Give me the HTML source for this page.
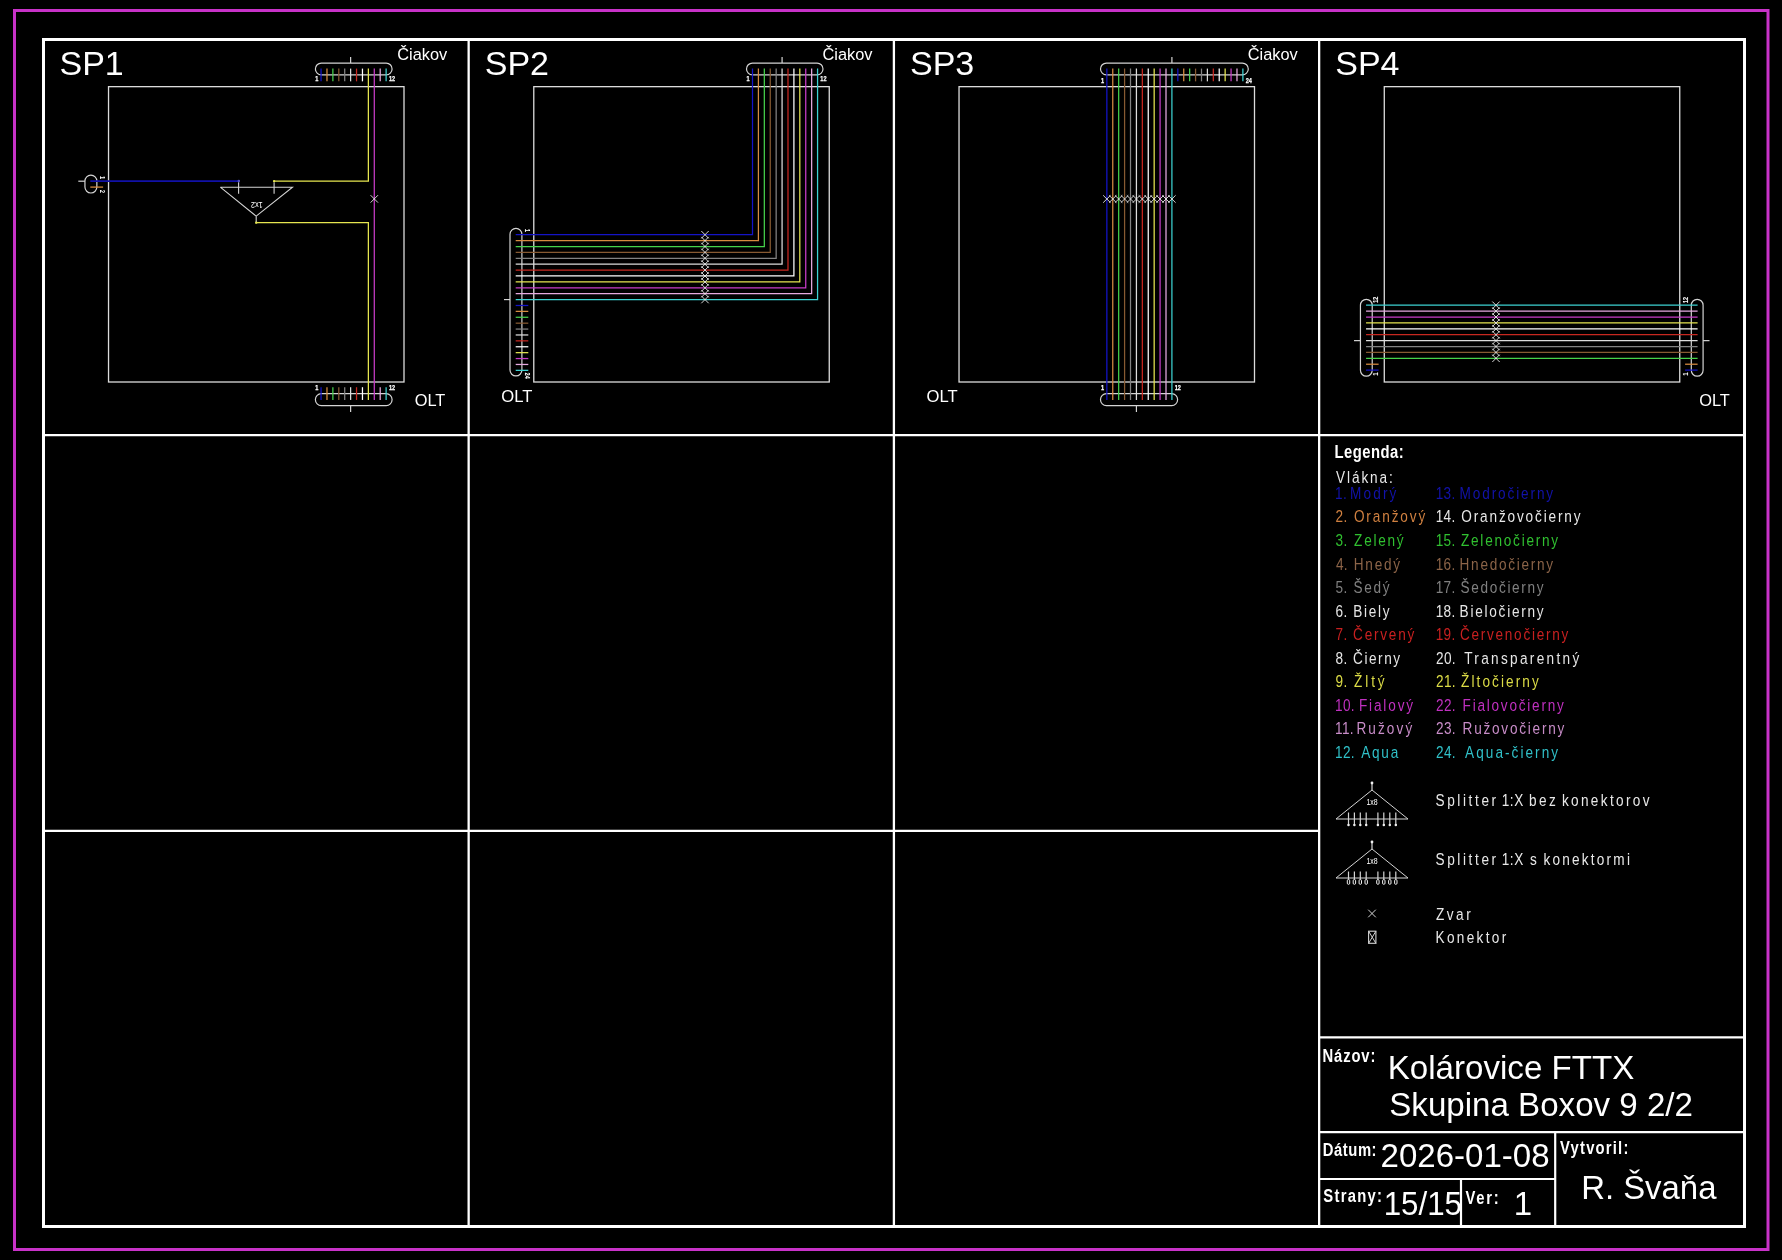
<!DOCTYPE html>
<html lang="sk">
<head>
<meta charset="utf-8">
<title>Kolárovice FTTX - Skupina Boxov 9 2/2</title>
<style>
html,body{margin:0;padding:0;background:#000;}
body{width:1782px;height:1260px;overflow:hidden;}
svg{display:block;font-family:"Liberation Sans",sans-serif;will-change:transform;}
</style>
</head>
<body>
<svg width="1782" height="1260" viewBox="0 0 1782 1260">
<rect x="0" y="0" width="1782" height="1260" fill="#000"/>
<rect x="14.5" y="10.5" width="1753.5" height="1239" rx="0" fill="none" stroke="#c832c8" stroke-width="3"/>
<rect x="43.5" y="39.5" width="1701" height="1187" rx="0" fill="none" stroke="#fff" stroke-width="3"/>
<line x1="468.65" y1="39.5" x2="468.65" y2="1226.5" stroke="#fff" stroke-width="2.3"/>
<line x1="893.9" y1="39.5" x2="893.9" y2="1226.5" stroke="#fff" stroke-width="2.3"/>
<line x1="1319.15" y1="39.5" x2="1319.15" y2="1226.5" stroke="#fff" stroke-width="2.3"/>
<line x1="43.5" y1="435.2" x2="1744.5" y2="435.2" stroke="#fff" stroke-width="2.3"/>
<line x1="43.5" y1="830.9" x2="1319.15" y2="830.9" stroke="#fff" stroke-width="2.3"/>
<line x1="1319.15" y1="1037.4" x2="1744.5" y2="1037.4" stroke="#fff" stroke-width="2.2"/>
<line x1="1319.15" y1="1132.1" x2="1744.5" y2="1132.1" stroke="#fff" stroke-width="2.2"/>
<line x1="1319.15" y1="1179" x2="1555.2" y2="1179" stroke="#fff" stroke-width="2.2"/>
<line x1="1555.2" y1="1132.1" x2="1555.2" y2="1226.5" stroke="#fff" stroke-width="2.2"/>
<line x1="1461" y1="1179" x2="1461" y2="1226.5" stroke="#fff" stroke-width="2.2"/>
<rect x="108.53" y="86.66" width="295.47" height="295.34" rx="0" fill="none" stroke="#dcdcdc" stroke-width="1.3"/>
<rect x="533.78" y="86.66" width="295.47" height="295.34" rx="0" fill="none" stroke="#dcdcdc" stroke-width="1.3"/>
<rect x="959.03" y="86.66" width="295.47" height="295.34" rx="0" fill="none" stroke="#dcdcdc" stroke-width="1.3"/>
<rect x="1384.28" y="86.66" width="295.47" height="295.34" rx="0" fill="none" stroke="#dcdcdc" stroke-width="1.3"/>
<rect x="315.4" y="63.07" width="76.68" height="11.79" rx="5.9" fill="none" stroke="#d4d4d4" stroke-width="1.2"/>
<line x1="350.62" y1="57" x2="350.62" y2="63" stroke="#d4d4d4" stroke-width="1.2"/>
<line x1="321.05" y1="68.6" x2="321.05" y2="81.35" stroke="#1414c8" stroke-width="1.25"/>
<line x1="326.97" y1="68.6" x2="326.97" y2="81.35" stroke="#d88c41" stroke-width="1.25"/>
<line x1="332.88" y1="68.6" x2="332.88" y2="81.35" stroke="#46d24b" stroke-width="1.25"/>
<line x1="338.8" y1="68.6" x2="338.8" y2="81.35" stroke="#875a32" stroke-width="1.25"/>
<line x1="344.71" y1="68.6" x2="344.71" y2="81.35" stroke="#828282" stroke-width="1.25"/>
<line x1="350.62" y1="68.6" x2="350.62" y2="81.35" stroke="#dcdcdc" stroke-width="1.25"/>
<line x1="356.54" y1="68.6" x2="356.54" y2="81.35" stroke="#c82820" stroke-width="1.25"/>
<line x1="362.46" y1="68.6" x2="362.46" y2="81.35" stroke="#ffffff" stroke-width="1.25"/>
<line x1="380.2" y1="68.6" x2="380.2" y2="81.35" stroke="#e6aae0" stroke-width="1.25"/>
<line x1="386.12" y1="68.6" x2="386.12" y2="81.35" stroke="#3cd2d2" stroke-width="1.25"/>
<text x="318.25" y="81.2" font-size="7.2" font-weight="bold" text-anchor="end" fill="#fff" stroke="#fff" stroke-width="0.25" textLength="3.1" lengthAdjust="spacingAndGlyphs">1</text>
<text x="388.92" y="81.2" font-size="7.2" font-weight="bold" text-anchor="start" fill="#fff" stroke="#fff" stroke-width="0.25" textLength="6.2" lengthAdjust="spacingAndGlyphs">12</text>
<rect x="315.4" y="393.67" width="76.68" height="11.9" rx="5.9" fill="none" stroke="#d4d4d4" stroke-width="1.2"/>
<line x1="350.62" y1="405.6" x2="350.62" y2="412" stroke="#d4d4d4" stroke-width="1.2"/>
<line x1="321.05" y1="387.2" x2="321.05" y2="399.95" stroke="#1414c8" stroke-width="1.25"/>
<line x1="326.97" y1="387.2" x2="326.97" y2="399.95" stroke="#d88c41" stroke-width="1.25"/>
<line x1="332.88" y1="387.2" x2="332.88" y2="399.95" stroke="#46d24b" stroke-width="1.25"/>
<line x1="338.8" y1="387.2" x2="338.8" y2="399.95" stroke="#875a32" stroke-width="1.25"/>
<line x1="344.71" y1="387.2" x2="344.71" y2="399.95" stroke="#828282" stroke-width="1.25"/>
<line x1="350.62" y1="387.2" x2="350.62" y2="399.95" stroke="#dcdcdc" stroke-width="1.25"/>
<line x1="356.54" y1="387.2" x2="356.54" y2="399.95" stroke="#c82820" stroke-width="1.25"/>
<line x1="362.46" y1="387.2" x2="362.46" y2="399.95" stroke="#ffffff" stroke-width="1.25"/>
<line x1="380.2" y1="387.2" x2="380.2" y2="399.95" stroke="#e6aae0" stroke-width="1.25"/>
<line x1="386.12" y1="387.2" x2="386.12" y2="399.95" stroke="#3cd2d2" stroke-width="1.25"/>
<text x="318.25" y="390" font-size="7.2" font-weight="bold" text-anchor="end" fill="#fff" stroke="#fff" stroke-width="0.25" textLength="3.1" lengthAdjust="spacingAndGlyphs">1</text>
<text x="388.92" y="390" font-size="7.2" font-weight="bold" text-anchor="start" fill="#fff" stroke="#fff" stroke-width="0.25" textLength="6.2" lengthAdjust="spacingAndGlyphs">12</text>
<polyline points="368.37,68.6 368.37,181.1 274.1,181.1" fill="none" stroke="#e6e650" stroke-width="1.25"/>
<polyline points="256.2,222.66 368.37,222.66 368.37,399.95" fill="none" stroke="#e6e650" stroke-width="1.25"/>
<line x1="374.29" y1="68.6" x2="374.29" y2="399.95" stroke="#c83cc8" stroke-width="1.25"/>
<path d="M370.59 195.2L377.99 202.6M370.59 202.6L377.99 195.2" stroke="#ececec" stroke-width="0.9" fill="none"/>
<rect x="84.95" y="175.2" width="11.9" height="17.8" rx="5.9" fill="none" stroke="#d4d4d4" stroke-width="1.2"/>
<line x1="78.3" y1="181.2" x2="84.9" y2="181.2" stroke="#d4d4d4" stroke-width="1.2"/>
<line x1="90.3" y1="181.1" x2="238.7" y2="181.1" stroke="#1010a8" stroke-width="1.9"/>
<line x1="90.3" y1="187.1" x2="103.1" y2="187.1" stroke="#d88c41" stroke-width="1.25"/>
<text x="100.2" y="175.9" font-size="7.6" font-weight="bold" text-anchor="start" fill="#fff" stroke="#fff" stroke-width="0" textLength="3.27" lengthAdjust="spacingAndGlyphs" transform="rotate(90 100.2 175.9)">1</text>
<text x="100.2" y="189.7" font-size="7.6" font-weight="bold" text-anchor="start" fill="#fff" stroke="#fff" stroke-width="0" textLength="3.27" lengthAdjust="spacingAndGlyphs" transform="rotate(90 100.2 189.7)">2</text>
<polyline points="220.3,187.15 292.5,187.15 256.2,216.2 220.3,187.15" fill="none" stroke="#d4d4d4" stroke-width="1.05"/>
<line x1="238.6" y1="182.3" x2="238.6" y2="193.7" stroke="#d4d4d4" stroke-width="1.1"/>
<line x1="274.1" y1="182.3" x2="274.1" y2="193.7" stroke="#d4d4d4" stroke-width="1.1"/>
<line x1="256.2" y1="216.2" x2="256.2" y2="222.66" stroke="#d4d4d4" stroke-width="1.1"/>
<circle cx="238.8" cy="181.1" r="1.25" fill="#5050c8"/>
<circle cx="274.1" cy="181.1" r="1.2" fill="#e6e650"/>
<circle cx="256.2" cy="222.66" r="1.2" fill="#e6e650"/>
<text x="256.9" y="204.6" font-size="9" text-anchor="middle" fill="#fff" transform="rotate(180 256.9 204.6) translate(0 3.1)" textLength="11.8" lengthAdjust="spacingAndGlyphs">1x2</text>
<rect x="746.5" y="63.07" width="76.5" height="11.79" rx="5.9" fill="none" stroke="#d4d4d4" stroke-width="1.2"/>
<line x1="782.08" y1="57" x2="782.08" y2="63" stroke="#d4d4d4" stroke-width="1.2"/>
<text x="749.7" y="81.2" font-size="7.2" font-weight="bold" text-anchor="end" fill="#fff" stroke="#fff" stroke-width="0.25" textLength="3.1" lengthAdjust="spacingAndGlyphs">1</text>
<text x="820.37" y="81.2" font-size="7.2" font-weight="bold" text-anchor="start" fill="#fff" stroke="#fff" stroke-width="0.25" textLength="6.2" lengthAdjust="spacingAndGlyphs">12</text>
<rect x="510" y="228.4" width="11.9" height="147.56" rx="5.9" fill="none" stroke="#d4d4d4" stroke-width="1.2"/>
<line x1="504" y1="299.58" x2="510" y2="299.58" stroke="#d4d4d4" stroke-width="1.2"/>
<polyline points="515.7,234.7 752.5,234.7 752.5,68.6" fill="none" stroke="#1414c8" stroke-width="1.25"/>
<polyline points="515.7,240.6 758.41,240.6 758.41,68.6" fill="none" stroke="#d88c41" stroke-width="1.25"/>
<polyline points="515.7,246.5 764.33,246.5 764.33,68.6" fill="none" stroke="#46d24b" stroke-width="1.25"/>
<polyline points="515.7,252.39 770.25,252.39 770.25,68.6" fill="none" stroke="#875a32" stroke-width="1.25"/>
<polyline points="515.7,258.29 776.16,258.29 776.16,68.6" fill="none" stroke="#828282" stroke-width="1.25"/>
<polyline points="515.7,264.19 782.08,264.19 782.08,68.6" fill="none" stroke="#dcdcdc" stroke-width="1.25"/>
<polyline points="515.7,270.09 787.99,270.09 787.99,68.6" fill="none" stroke="#c82820" stroke-width="1.25"/>
<polyline points="515.7,275.99 793.9,275.99 793.9,68.6" fill="none" stroke="#ffffff" stroke-width="1.25"/>
<polyline points="515.7,281.88 799.82,281.88 799.82,68.6" fill="none" stroke="#e6e650" stroke-width="1.25"/>
<polyline points="515.7,287.78 805.74,287.78 805.74,68.6" fill="none" stroke="#c83cc8" stroke-width="1.25"/>
<polyline points="515.7,293.68 811.65,293.68 811.65,68.6" fill="none" stroke="#e6aae0" stroke-width="1.25"/>
<polyline points="515.7,299.58 817.57,299.58 817.57,68.6" fill="none" stroke="#3cd2d2" stroke-width="1.25"/>
<line x1="515.7" y1="305.48" x2="528.3" y2="305.48" stroke="#1414c8" stroke-width="1.25"/>
<line x1="515.7" y1="311.37" x2="528.3" y2="311.37" stroke="#d88c41" stroke-width="1.25"/>
<line x1="515.7" y1="317.27" x2="528.3" y2="317.27" stroke="#46d24b" stroke-width="1.25"/>
<line x1="515.7" y1="323.17" x2="528.3" y2="323.17" stroke="#875a32" stroke-width="1.25"/>
<line x1="515.7" y1="329.07" x2="528.3" y2="329.07" stroke="#828282" stroke-width="1.25"/>
<line x1="515.7" y1="334.97" x2="528.3" y2="334.97" stroke="#dcdcdc" stroke-width="1.25"/>
<line x1="515.7" y1="340.86" x2="528.3" y2="340.86" stroke="#c82820" stroke-width="1.25"/>
<line x1="515.7" y1="346.76" x2="528.3" y2="346.76" stroke="#ffffff" stroke-width="1.25"/>
<line x1="515.7" y1="352.66" x2="528.3" y2="352.66" stroke="#e6e650" stroke-width="1.25"/>
<line x1="515.7" y1="358.56" x2="528.3" y2="358.56" stroke="#c83cc8" stroke-width="1.25"/>
<line x1="515.7" y1="364.46" x2="528.3" y2="364.46" stroke="#e6aae0" stroke-width="1.25"/>
<line x1="515.7" y1="370.35" x2="528.3" y2="370.35" stroke="#3cd2d2" stroke-width="1.25"/>
<path d="M701.3 231L708.7 238.4M701.3 238.4L708.7 231" stroke="#ececec" stroke-width="0.9" fill="none"/>
<path d="M701.3 236.9L708.7 244.3M701.3 244.3L708.7 236.9" stroke="#ececec" stroke-width="0.9" fill="none"/>
<path d="M701.3 242.8L708.7 250.2M701.3 250.2L708.7 242.8" stroke="#ececec" stroke-width="0.9" fill="none"/>
<path d="M701.3 248.69L708.7 256.09M701.3 256.09L708.7 248.69" stroke="#ececec" stroke-width="0.9" fill="none"/>
<path d="M701.3 254.59L708.7 261.99M701.3 261.99L708.7 254.59" stroke="#ececec" stroke-width="0.9" fill="none"/>
<path d="M701.3 260.49L708.7 267.89M701.3 267.89L708.7 260.49" stroke="#ececec" stroke-width="0.9" fill="none"/>
<path d="M701.3 266.39L708.7 273.79M701.3 273.79L708.7 266.39" stroke="#ececec" stroke-width="0.9" fill="none"/>
<path d="M701.3 272.29L708.7 279.69M701.3 279.69L708.7 272.29" stroke="#ececec" stroke-width="0.9" fill="none"/>
<path d="M701.3 278.18L708.7 285.58M701.3 285.58L708.7 278.18" stroke="#ececec" stroke-width="0.9" fill="none"/>
<path d="M701.3 284.08L708.7 291.48M701.3 291.48L708.7 284.08" stroke="#ececec" stroke-width="0.9" fill="none"/>
<path d="M701.3 289.98L708.7 297.38M701.3 297.38L708.7 289.98" stroke="#ececec" stroke-width="0.9" fill="none"/>
<path d="M701.3 295.88L708.7 303.28M701.3 303.28L708.7 295.88" stroke="#ececec" stroke-width="0.9" fill="none"/>
<text x="525.4" y="229" font-size="7.2" font-weight="bold" text-anchor="start" fill="#fff" stroke="#fff" stroke-width="0.08" textLength="3.1" lengthAdjust="spacingAndGlyphs" transform="rotate(90 525.4 229)">1</text>
<text x="525.4" y="372.6" font-size="7.2" font-weight="bold" text-anchor="start" fill="#fff" stroke="#fff" stroke-width="0.08" textLength="6.2" lengthAdjust="spacingAndGlyphs" transform="rotate(90 525.4 372.6)">24</text>
<rect x="1100.5" y="63.07" width="147.78" height="11.79" rx="5.9" fill="none" stroke="#d4d4d4" stroke-width="1.2"/>
<line x1="1171.91" y1="57" x2="1171.91" y2="63" stroke="#d4d4d4" stroke-width="1.2"/>
<line x1="1177.83" y1="68.6" x2="1177.83" y2="81.35" stroke="#1414c8" stroke-width="1.25"/>
<line x1="1183.74" y1="68.6" x2="1183.74" y2="81.35" stroke="#d88c41" stroke-width="1.25"/>
<line x1="1189.66" y1="68.6" x2="1189.66" y2="81.35" stroke="#46d24b" stroke-width="1.25"/>
<line x1="1195.57" y1="68.6" x2="1195.57" y2="81.35" stroke="#875a32" stroke-width="1.25"/>
<line x1="1201.49" y1="68.6" x2="1201.49" y2="81.35" stroke="#828282" stroke-width="1.25"/>
<line x1="1207.4" y1="68.6" x2="1207.4" y2="81.35" stroke="#dcdcdc" stroke-width="1.25"/>
<line x1="1213.32" y1="68.6" x2="1213.32" y2="81.35" stroke="#c82820" stroke-width="1.25"/>
<line x1="1219.23" y1="68.6" x2="1219.23" y2="81.35" stroke="#ffffff" stroke-width="1.25"/>
<line x1="1225.15" y1="68.6" x2="1225.15" y2="81.35" stroke="#e6e650" stroke-width="1.25"/>
<line x1="1231.06" y1="68.6" x2="1231.06" y2="81.35" stroke="#c83cc8" stroke-width="1.25"/>
<line x1="1236.98" y1="68.6" x2="1236.98" y2="81.35" stroke="#e6aae0" stroke-width="1.25"/>
<line x1="1242.89" y1="68.6" x2="1242.89" y2="81.35" stroke="#3cd2d2" stroke-width="1.25"/>
<text x="1104.05" y="82.8" font-size="7.2" font-weight="bold" text-anchor="end" fill="#fff" stroke="#fff" stroke-width="0.25" textLength="3.1" lengthAdjust="spacingAndGlyphs">1</text>
<text x="1245.69" y="82.8" font-size="7.2" font-weight="bold" text-anchor="start" fill="#fff" stroke="#fff" stroke-width="0.25" textLength="6.2" lengthAdjust="spacingAndGlyphs">24</text>
<rect x="1100.5" y="393.67" width="77.1" height="11.9" rx="5.9" fill="none" stroke="#d4d4d4" stroke-width="1.2"/>
<line x1="1136.42" y1="405.6" x2="1136.42" y2="412" stroke="#d4d4d4" stroke-width="1.2"/>
<text x="1104.05" y="390" font-size="7.2" font-weight="bold" text-anchor="end" fill="#fff" stroke="#fff" stroke-width="0.25" textLength="3.1" lengthAdjust="spacingAndGlyphs">1</text>
<text x="1174.71" y="390" font-size="7.2" font-weight="bold" text-anchor="start" fill="#fff" stroke="#fff" stroke-width="0.25" textLength="6.2" lengthAdjust="spacingAndGlyphs">12</text>
<line x1="1106.85" y1="68.6" x2="1106.85" y2="399.95" stroke="#1414c8" stroke-width="1.25"/>
<line x1="1112.76" y1="68.6" x2="1112.76" y2="399.95" stroke="#d88c41" stroke-width="1.25"/>
<line x1="1118.68" y1="68.6" x2="1118.68" y2="399.95" stroke="#46d24b" stroke-width="1.25"/>
<line x1="1124.59" y1="68.6" x2="1124.59" y2="399.95" stroke="#875a32" stroke-width="1.25"/>
<line x1="1130.51" y1="68.6" x2="1130.51" y2="399.95" stroke="#828282" stroke-width="1.25"/>
<line x1="1136.42" y1="68.6" x2="1136.42" y2="399.95" stroke="#dcdcdc" stroke-width="1.25"/>
<line x1="1142.34" y1="68.6" x2="1142.34" y2="399.95" stroke="#c82820" stroke-width="1.25"/>
<line x1="1148.25" y1="68.6" x2="1148.25" y2="399.95" stroke="#ffffff" stroke-width="1.25"/>
<line x1="1154.17" y1="68.6" x2="1154.17" y2="399.95" stroke="#e6e650" stroke-width="1.25"/>
<line x1="1160.08" y1="68.6" x2="1160.08" y2="399.95" stroke="#c83cc8" stroke-width="1.25"/>
<line x1="1166" y1="68.6" x2="1166" y2="399.95" stroke="#e6aae0" stroke-width="1.25"/>
<line x1="1171.91" y1="68.6" x2="1171.91" y2="399.95" stroke="#3cd2d2" stroke-width="1.25"/>
<path d="M1103.15 195.3L1110.55 202.7M1103.15 202.7L1110.55 195.3" stroke="#ececec" stroke-width="0.9" fill="none"/>
<path d="M1109.06 195.3L1116.46 202.7M1109.06 202.7L1116.46 195.3" stroke="#ececec" stroke-width="0.9" fill="none"/>
<path d="M1114.98 195.3L1122.38 202.7M1114.98 202.7L1122.38 195.3" stroke="#ececec" stroke-width="0.9" fill="none"/>
<path d="M1120.89 195.3L1128.29 202.7M1120.89 202.7L1128.29 195.3" stroke="#ececec" stroke-width="0.9" fill="none"/>
<path d="M1126.81 195.3L1134.21 202.7M1126.81 202.7L1134.21 195.3" stroke="#ececec" stroke-width="0.9" fill="none"/>
<path d="M1132.72 195.3L1140.12 202.7M1132.72 202.7L1140.12 195.3" stroke="#ececec" stroke-width="0.9" fill="none"/>
<path d="M1138.64 195.3L1146.04 202.7M1138.64 202.7L1146.04 195.3" stroke="#ececec" stroke-width="0.9" fill="none"/>
<path d="M1144.55 195.3L1151.95 202.7M1144.55 202.7L1151.95 195.3" stroke="#ececec" stroke-width="0.9" fill="none"/>
<path d="M1150.47 195.3L1157.87 202.7M1150.47 202.7L1157.87 195.3" stroke="#ececec" stroke-width="0.9" fill="none"/>
<path d="M1156.38 195.3L1163.78 202.7M1156.38 202.7L1163.78 195.3" stroke="#ececec" stroke-width="0.9" fill="none"/>
<path d="M1162.3 195.3L1169.7 202.7M1162.3 202.7L1169.7 195.3" stroke="#ececec" stroke-width="0.9" fill="none"/>
<path d="M1168.21 195.3L1175.62 202.7M1168.21 202.7L1175.62 195.3" stroke="#ececec" stroke-width="0.9" fill="none"/>
<rect x="1360.44" y="299.3" width="11.78" height="76.9" rx="5.9" fill="none" stroke="#d4d4d4" stroke-width="1.2"/>
<rect x="1691.3" y="299.3" width="11.79" height="76.9" rx="5.9" fill="none" stroke="#d4d4d4" stroke-width="1.2"/>
<line x1="1354" y1="340.63" x2="1360.4" y2="340.63" stroke="#d4d4d4" stroke-width="1.2"/>
<line x1="1703.1" y1="340.63" x2="1709.5" y2="340.63" stroke="#d4d4d4" stroke-width="1.2"/>
<line x1="1366.05" y1="358.32" x2="1697.6" y2="358.32" stroke="#46d24b" stroke-width="1.25"/>
<path d="M1492.3 354.62L1499.7 362.02M1492.3 362.02L1499.7 354.62" stroke="#ececec" stroke-width="0.9" fill="none"/>
<line x1="1366.05" y1="352.42" x2="1697.6" y2="352.42" stroke="#875a32" stroke-width="1.25"/>
<path d="M1492.3 348.72L1499.7 356.12M1492.3 356.12L1499.7 348.72" stroke="#ececec" stroke-width="0.9" fill="none"/>
<line x1="1366.05" y1="346.53" x2="1697.6" y2="346.53" stroke="#828282" stroke-width="1.25"/>
<path d="M1492.3 342.83L1499.7 350.23M1492.3 350.23L1499.7 342.83" stroke="#ececec" stroke-width="0.9" fill="none"/>
<line x1="1366.05" y1="340.63" x2="1697.6" y2="340.63" stroke="#dcdcdc" stroke-width="1.25"/>
<path d="M1492.3 336.93L1499.7 344.33M1492.3 344.33L1499.7 336.93" stroke="#ececec" stroke-width="0.9" fill="none"/>
<line x1="1366.05" y1="334.73" x2="1697.6" y2="334.73" stroke="#c82820" stroke-width="1.25"/>
<path d="M1492.3 331.03L1499.7 338.43M1492.3 338.43L1499.7 331.03" stroke="#ececec" stroke-width="0.9" fill="none"/>
<line x1="1366.05" y1="328.83" x2="1697.6" y2="328.83" stroke="#ffffff" stroke-width="1.25"/>
<path d="M1492.3 325.13L1499.7 332.53M1492.3 332.53L1499.7 325.13" stroke="#ececec" stroke-width="0.9" fill="none"/>
<line x1="1366.05" y1="322.93" x2="1697.6" y2="322.93" stroke="#e6e650" stroke-width="1.25"/>
<path d="M1492.3 319.23L1499.7 326.63M1492.3 326.63L1499.7 319.23" stroke="#ececec" stroke-width="0.9" fill="none"/>
<line x1="1366.05" y1="317.04" x2="1697.6" y2="317.04" stroke="#c83cc8" stroke-width="1.25"/>
<path d="M1492.3 313.34L1499.7 320.74M1492.3 320.74L1499.7 313.34" stroke="#ececec" stroke-width="0.9" fill="none"/>
<line x1="1366.05" y1="311.14" x2="1697.6" y2="311.14" stroke="#e6aae0" stroke-width="1.25"/>
<path d="M1492.3 307.44L1499.7 314.84M1492.3 314.84L1499.7 307.44" stroke="#ececec" stroke-width="0.9" fill="none"/>
<line x1="1366.05" y1="305.24" x2="1697.6" y2="305.24" stroke="#3cd2d2" stroke-width="1.25"/>
<path d="M1492.3 301.54L1499.7 308.94M1492.3 308.94L1499.7 301.54" stroke="#ececec" stroke-width="0.9" fill="none"/>
<line x1="1366.05" y1="370.12" x2="1378.6" y2="370.12" stroke="#1414c8" stroke-width="1.25"/>
<line x1="1685.1" y1="370.12" x2="1697.6" y2="370.12" stroke="#1414c8" stroke-width="1.25"/>
<line x1="1366.05" y1="364.22" x2="1378.6" y2="364.22" stroke="#d88c41" stroke-width="1.25"/>
<line x1="1685.1" y1="364.22" x2="1697.6" y2="364.22" stroke="#d88c41" stroke-width="1.25"/>
<text x="1378.5" y="302.8" font-size="7.2" font-weight="bold" text-anchor="start" fill="#fff" stroke="#fff" stroke-width="0.08" textLength="6.2" lengthAdjust="spacingAndGlyphs" transform="rotate(-90 1378.5 302.8)">12</text>
<text x="1378.5" y="375.4" font-size="7.2" font-weight="bold" text-anchor="start" fill="#fff" stroke="#fff" stroke-width="0.08" textLength="3.1" lengthAdjust="spacingAndGlyphs" transform="rotate(-90 1378.5 375.4)">1</text>
<text x="1687.7" y="303" font-size="7.2" font-weight="bold" text-anchor="start" fill="#fff" stroke="#fff" stroke-width="0.08" textLength="6.2" lengthAdjust="spacingAndGlyphs" transform="rotate(-90 1687.7 303)">12</text>
<text x="1687.7" y="375.4" font-size="7.2" font-weight="bold" text-anchor="start" fill="#fff" stroke="#fff" stroke-width="0.08" textLength="3.1" lengthAdjust="spacingAndGlyphs" transform="rotate(-90 1687.7 375.4)">1</text>
<polyline points="1336,819 1372,790 1408,819 1336,819" fill="none" stroke="#d4d4d4" stroke-width="1.0"/>
<line x1="1372" y1="783.2" x2="1372" y2="790" stroke="#d4d4d4" stroke-width="1.2"/>
<circle cx="1372" cy="783" r="1.4" fill="#f0f0f0"/>
<line x1="1348.5" y1="812.5" x2="1348.5" y2="825" stroke="#d4d4d4" stroke-width="1.2"/>
<circle cx="1348.5" cy="825" r="1.25" fill="#f0f0f0"/>
<line x1="1354.4" y1="812.5" x2="1354.4" y2="825" stroke="#d4d4d4" stroke-width="1.2"/>
<circle cx="1354.4" cy="825" r="1.25" fill="#f0f0f0"/>
<line x1="1360.3" y1="812.5" x2="1360.3" y2="825" stroke="#d4d4d4" stroke-width="1.2"/>
<circle cx="1360.3" cy="825" r="1.25" fill="#f0f0f0"/>
<line x1="1366.2" y1="812.5" x2="1366.2" y2="825" stroke="#d4d4d4" stroke-width="1.2"/>
<circle cx="1366.2" cy="825" r="1.25" fill="#f0f0f0"/>
<line x1="1377.9" y1="812.5" x2="1377.9" y2="825" stroke="#d4d4d4" stroke-width="1.2"/>
<circle cx="1377.9" cy="825" r="1.25" fill="#f0f0f0"/>
<line x1="1383.8" y1="812.5" x2="1383.8" y2="825" stroke="#d4d4d4" stroke-width="1.2"/>
<circle cx="1383.8" cy="825" r="1.25" fill="#f0f0f0"/>
<line x1="1389.8" y1="812.5" x2="1389.8" y2="825" stroke="#d4d4d4" stroke-width="1.2"/>
<circle cx="1389.8" cy="825" r="1.25" fill="#f0f0f0"/>
<line x1="1395.8" y1="812.5" x2="1395.8" y2="825" stroke="#d4d4d4" stroke-width="1.2"/>
<circle cx="1395.8" cy="825" r="1.25" fill="#f0f0f0"/>
<text x="1372" y="804.9" font-size="8.6" text-anchor="middle" fill="#fff" textLength="11.2" lengthAdjust="spacingAndGlyphs">1x8</text>
<polyline points="1336,878 1372,849 1408,878 1336,878" fill="none" stroke="#d4d4d4" stroke-width="1.0"/>
<line x1="1372" y1="842.2" x2="1372" y2="849" stroke="#d4d4d4" stroke-width="1.2"/>
<circle cx="1372" cy="842" r="1.4" fill="#f0f0f0"/>
<line x1="1348.5" y1="871.5" x2="1348.5" y2="879.5" stroke="#d4d4d4" stroke-width="1.2"/>
<rect x="1347.3" y="879.6" width="2.4" height="4.7" rx="1.1" fill="none" stroke="#f0f0f0" stroke-width="1.0"/>
<line x1="1354.4" y1="871.5" x2="1354.4" y2="879.5" stroke="#d4d4d4" stroke-width="1.2"/>
<rect x="1353.2" y="879.6" width="2.4" height="4.7" rx="1.1" fill="none" stroke="#f0f0f0" stroke-width="1.0"/>
<line x1="1360.3" y1="871.5" x2="1360.3" y2="879.5" stroke="#d4d4d4" stroke-width="1.2"/>
<rect x="1359.1" y="879.6" width="2.4" height="4.7" rx="1.1" fill="none" stroke="#f0f0f0" stroke-width="1.0"/>
<line x1="1366.2" y1="871.5" x2="1366.2" y2="879.5" stroke="#d4d4d4" stroke-width="1.2"/>
<rect x="1365" y="879.6" width="2.4" height="4.7" rx="1.1" fill="none" stroke="#f0f0f0" stroke-width="1.0"/>
<line x1="1377.9" y1="871.5" x2="1377.9" y2="879.5" stroke="#d4d4d4" stroke-width="1.2"/>
<rect x="1376.7" y="879.6" width="2.4" height="4.7" rx="1.1" fill="none" stroke="#f0f0f0" stroke-width="1.0"/>
<line x1="1383.8" y1="871.5" x2="1383.8" y2="879.5" stroke="#d4d4d4" stroke-width="1.2"/>
<rect x="1382.6" y="879.6" width="2.4" height="4.7" rx="1.1" fill="none" stroke="#f0f0f0" stroke-width="1.0"/>
<line x1="1389.8" y1="871.5" x2="1389.8" y2="879.5" stroke="#d4d4d4" stroke-width="1.2"/>
<rect x="1388.6" y="879.6" width="2.4" height="4.7" rx="1.1" fill="none" stroke="#f0f0f0" stroke-width="1.0"/>
<line x1="1395.8" y1="871.5" x2="1395.8" y2="879.5" stroke="#d4d4d4" stroke-width="1.2"/>
<rect x="1394.6" y="879.6" width="2.4" height="4.7" rx="1.1" fill="none" stroke="#f0f0f0" stroke-width="1.0"/>
<text x="1372" y="863.9" font-size="8.6" text-anchor="middle" fill="#fff" textLength="11.2" lengthAdjust="spacingAndGlyphs">1x8</text>
<path d="M1368.2 909.7L1375.8 917.3M1368.2 917.3L1375.8 909.7" stroke="#d4d4d4" stroke-width="1.0" fill="none"/>
<rect x="1368.6" y="931.2" width="7.3" height="12.1" rx="0" fill="none" stroke="#d4d4d4" stroke-width="1.1"/>
<path d="M1368.6 931.2L1375.9 943.3M1375.9 931.2L1368.6 943.3" stroke="#d2d2d2" stroke-width="1" fill="none"/>
<text transform="translate(0 498.9) scale(0.8 1)" font-size="17" font-weight="normal" fill="#1212aa"><tspan x="1668.87" letter-spacing="0.400">1. </tspan><tspan x="1687.62" letter-spacing="2.656">Modrý</tspan></text>
<text transform="translate(0 522.45) scale(0.8 1)" font-size="17" font-weight="normal" fill="#d08040"><tspan x="1669.38" letter-spacing="0.400">2. </tspan><tspan x="1692.38" letter-spacing="2.357">Oranžový</tspan></text>
<text transform="translate(0 546) scale(0.8 1)" font-size="17" font-weight="normal" fill="#30c030"><tspan x="1669.38" letter-spacing="0.400">3. </tspan><tspan x="1692.62" letter-spacing="2.200">Zelený</tspan></text>
<text transform="translate(0 569.55) scale(0.8 1)" font-size="17" font-weight="normal" fill="#8c6448"><tspan x="1669.87" letter-spacing="0.400">4. </tspan><tspan x="1692.25" letter-spacing="2.188">Hnedý</tspan></text>
<text transform="translate(0 593.1) scale(0.8 1)" font-size="17" font-weight="normal" fill="#808080"><tspan x="1669.38" letter-spacing="0.400">5. </tspan><tspan x="1692" letter-spacing="2.042">Šedý</tspan></text>
<text transform="translate(0 616.65) scale(0.8 1)" font-size="17" font-weight="normal" fill="#e6e6e6"><tspan x="1669.38" letter-spacing="0.400">6. </tspan><tspan x="1691.5" letter-spacing="2.156">Biely</tspan></text>
<text transform="translate(0 640.2) scale(0.8 1)" font-size="17" font-weight="normal" fill="#c82020"><tspan x="1669.38" letter-spacing="0.400">7. </tspan><tspan x="1691.38" letter-spacing="2.208">Červený</tspan></text>
<text transform="translate(0 663.75) scale(0.8 1)" font-size="17" font-weight="normal" fill="#e6e6e6"><tspan x="1669.38" letter-spacing="0.400">8. </tspan><tspan x="1691.38" letter-spacing="1.925">Čierny</tspan></text>
<text transform="translate(0 687.3) scale(0.8 1)" font-size="17" font-weight="normal" fill="#dcdc46"><tspan x="1669.38" letter-spacing="0.400">9. </tspan><tspan x="1692.62" letter-spacing="3.583">Žltý</tspan></text>
<text transform="translate(0 710.85) scale(0.8 1)" font-size="17" font-weight="normal" fill="#c030c0"><tspan x="1668.87" letter-spacing="0.400">10. </tspan><tspan x="1698.62" letter-spacing="2.333">Fialový</tspan></text>
<text transform="translate(0 734.4) scale(0.8 1)" font-size="17" font-weight="normal" fill="#c88cc8"><tspan x="1668.87" letter-spacing="0.400">11. </tspan><tspan x="1695.5" letter-spacing="2.625">Ružový</tspan></text>
<text transform="translate(0 757.95) scale(0.8 1)" font-size="17" font-weight="normal" fill="#30c0c8"><tspan x="1668.87" letter-spacing="0.400">12. </tspan><tspan x="1701.5" letter-spacing="2.208">Aqua</tspan></text>
<text transform="translate(0 498.9) scale(0.8 1)" font-size="17" font-weight="normal" fill="#1212aa"><tspan x="1794.62" letter-spacing="0.400">13. </tspan><tspan x="1824.5" letter-spacing="2.350">Modročierny</tspan></text>
<text transform="translate(0 522.45) scale(0.8 1)" font-size="17" font-weight="normal" fill="#e8e8e8"><tspan x="1794.62" letter-spacing="0.400">14. </tspan><tspan x="1826.63" letter-spacing="2.317">Oranžovočierny</tspan></text>
<text transform="translate(0 546) scale(0.8 1)" font-size="17" font-weight="normal" fill="#30c030"><tspan x="1794.62" letter-spacing="0.400">15. </tspan><tspan x="1826.25" letter-spacing="2.205">Zelenočierny</tspan></text>
<text transform="translate(0 569.55) scale(0.8 1)" font-size="17" font-weight="normal" fill="#8c6448"><tspan x="1794.62" letter-spacing="0.400">16. </tspan><tspan x="1824.5" letter-spacing="2.150">Hnedočierny</tspan></text>
<text transform="translate(0 593.1) scale(0.8 1)" font-size="17" font-weight="normal" fill="#808080"><tspan x="1794.62" letter-spacing="0.400">17. </tspan><tspan x="1825.62" letter-spacing="2.097">Šedočierny</tspan></text>
<text transform="translate(0 616.65) scale(0.8 1)" font-size="17" font-weight="normal" fill="#e6e6e6"><tspan x="1794.62" letter-spacing="0.400">18. </tspan><tspan x="1824.5" letter-spacing="2.200">Bieločierny</tspan></text>
<text transform="translate(0 640.2) scale(0.8 1)" font-size="17" font-weight="normal" fill="#c82020"><tspan x="1794.62" letter-spacing="0.400">19. </tspan><tspan x="1825" letter-spacing="2.156">Červenočierny</tspan></text>
<text transform="translate(0 663.75) scale(0.8 1)" font-size="17" font-weight="normal" fill="#e6e6e6"><tspan x="1795.12" letter-spacing="0.400">20. </tspan><tspan x="1830.25" letter-spacing="2.906">Transparentný</tspan></text>
<text transform="translate(0 687.3) scale(0.8 1)" font-size="17" font-weight="normal" fill="#dcdc46"><tspan x="1795.12" letter-spacing="0.400">21. </tspan><tspan x="1826.25" letter-spacing="2.625">Žltočierny</tspan></text>
<text transform="translate(0 710.85) scale(0.8 1)" font-size="17" font-weight="normal" fill="#c030c0"><tspan x="1795.12" letter-spacing="0.400">22. </tspan><tspan x="1828.25" letter-spacing="2.208">Fialovočierny</tspan></text>
<text transform="translate(0 734.4) scale(0.8 1)" font-size="17" font-weight="normal" fill="#c88cc8"><tspan x="1795.12" letter-spacing="0.400">23. </tspan><tspan x="1828.25" letter-spacing="2.205">Ružovočierny</tspan></text>
<text transform="translate(0 757.95) scale(0.8 1)" font-size="17" font-weight="normal" fill="#30c0c8"><tspan x="1795.12" letter-spacing="0.400">24. </tspan><tspan x="1831.37" letter-spacing="2.563">Aqua-čierny</tspan></text>
<text transform="translate(0 457.8) scale(0.78 1)" font-size="19" font-weight="bold" fill="#ffffff"><tspan x="1710.8" letter-spacing="0.628">Legenda:</tspan></text>
<text transform="translate(0 482.8) scale(0.8 1)" font-size="17" font-weight="normal" fill="#e8e8e8"><tspan x="1670.12" letter-spacing="2.375">Vlákna:</tspan></text>
<text transform="translate(0 805.6) scale(0.8 1)" font-size="17" font-weight="normal" fill="#e8e8e8"><tspan x="1794.38" letter-spacing="3.268">Splitter </tspan><tspan x="1877.12" letter-spacing="0.750">1:X </tspan><tspan x="1911.12" letter-spacing="3.125">bez </tspan><tspan x="1952.38" letter-spacing="2.944">konektorov</tspan></text>
<text transform="translate(0 864.8) scale(0.8 1)" font-size="17" font-weight="normal" fill="#e8e8e8"><tspan x="1794.38" letter-spacing="3.268">Splitter </tspan><tspan x="1877.12" letter-spacing="0.750">1:X </tspan><tspan x="1912.37" letter-spacing="0.400">s </tspan><tspan x="1929.25" letter-spacing="2.792">konektormi</tspan></text>
<text transform="translate(0 919.7) scale(0.8 1)" font-size="17" font-weight="normal" fill="#e8e8e8"><tspan x="1795.12" letter-spacing="3.083">Zvar</tspan></text>
<text transform="translate(0 943.3) scale(0.8 1)" font-size="17" font-weight="normal" fill="#e8e8e8"><tspan x="1794.38" letter-spacing="2.911">Konektor</tspan></text>
<text transform="translate(0 1061.6) scale(0.78 1)" font-size="19" font-weight="bold" fill="#ffffff"><tspan x="1695.54" letter-spacing="1.099">Názov:</tspan></text>
<text transform="translate(0 1156.4) scale(0.78 1)" font-size="19" font-weight="bold" fill="#ffffff"><tspan x="1695.8" letter-spacing="0.731">Dátum:</tspan></text>
<text transform="translate(0 1201.5) scale(0.78 1)" font-size="19" font-weight="bold" fill="#ffffff"><tspan x="1696.55" letter-spacing="1.638">Strany:</tspan></text>
<text transform="translate(0 1203.5) scale(0.78 1)" font-size="19" font-weight="bold" fill="#ffffff"><tspan x="1878.72" letter-spacing="2.254">Ver:</tspan></text>
<text transform="translate(0 1154.3) scale(0.78 1)" font-size="19" font-weight="bold" fill="#ffffff"><tspan x="2000.13" letter-spacing="1.533">Vytvoril:</tspan></text>
<text transform="translate(1387.74 1078.75) scale(1.0039 1)" font-size="33" font-weight="normal" fill="#ffffff">Kolárovice FTTX</text>
<text transform="translate(1389.29 1115.5) scale(1.0033 1)" font-size="33" font-weight="normal" fill="#ffffff">Skupina Boxov 9 2/2</text>
<text transform="translate(1380.5 1166.9) scale(1.0024 1)" font-size="33" font-weight="normal" fill="#ffffff">2026-01-08</text>
<text transform="translate(1383.63 1215) scale(0.9498 1)" font-size="33" font-weight="normal" fill="#ffffff">15/15</text>
<text transform="translate(1513.83 1215) scale(1.0000 1)" font-size="33" font-weight="normal" fill="#ffffff">1</text>
<text transform="translate(1581.16 1198.8) scale(0.9970 1)" font-size="33" font-weight="normal" fill="#ffffff">R. Švaňa</text>
<text transform="translate(59.5 75) scale(1.0000 1)" font-size="34" font-weight="normal" fill="#ffffff">SP1</text>
<text transform="translate(484.75 75) scale(1.0000 1)" font-size="34" font-weight="normal" fill="#ffffff">SP2</text>
<text transform="translate(910 75) scale(1.0000 1)" font-size="34" font-weight="normal" fill="#ffffff">SP3</text>
<text transform="translate(1335.25 75) scale(1.0000 1)" font-size="34" font-weight="normal" fill="#ffffff">SP4</text>
<text transform="translate(397.27 59.6) scale(0.9743 1)" font-size="16.8" font-weight="normal" fill="#ffffff">Čiakov</text>
<text transform="translate(822.52 59.6) scale(0.9743 1)" font-size="16.8" font-weight="normal" fill="#ffffff">Čiakov</text>
<text transform="translate(1247.77 59.6) scale(0.9743 1)" font-size="16.8" font-weight="normal" fill="#ffffff">Čiakov</text>
<text transform="translate(414.76 406) scale(0.9916 1)" font-size="16.5" font-weight="normal" fill="#ffffff">OLT</text>
<text transform="translate(501.24 402) scale(1.0084 1)" font-size="16.5" font-weight="normal" fill="#ffffff">OLT</text>
<text transform="translate(926.49 402) scale(1.0084 1)" font-size="16.5" font-weight="normal" fill="#ffffff">OLT</text>
<text transform="translate(1699.26 406) scale(0.9916 1)" font-size="16.5" font-weight="normal" fill="#ffffff">OLT</text>
</svg>
</body>
</html>
